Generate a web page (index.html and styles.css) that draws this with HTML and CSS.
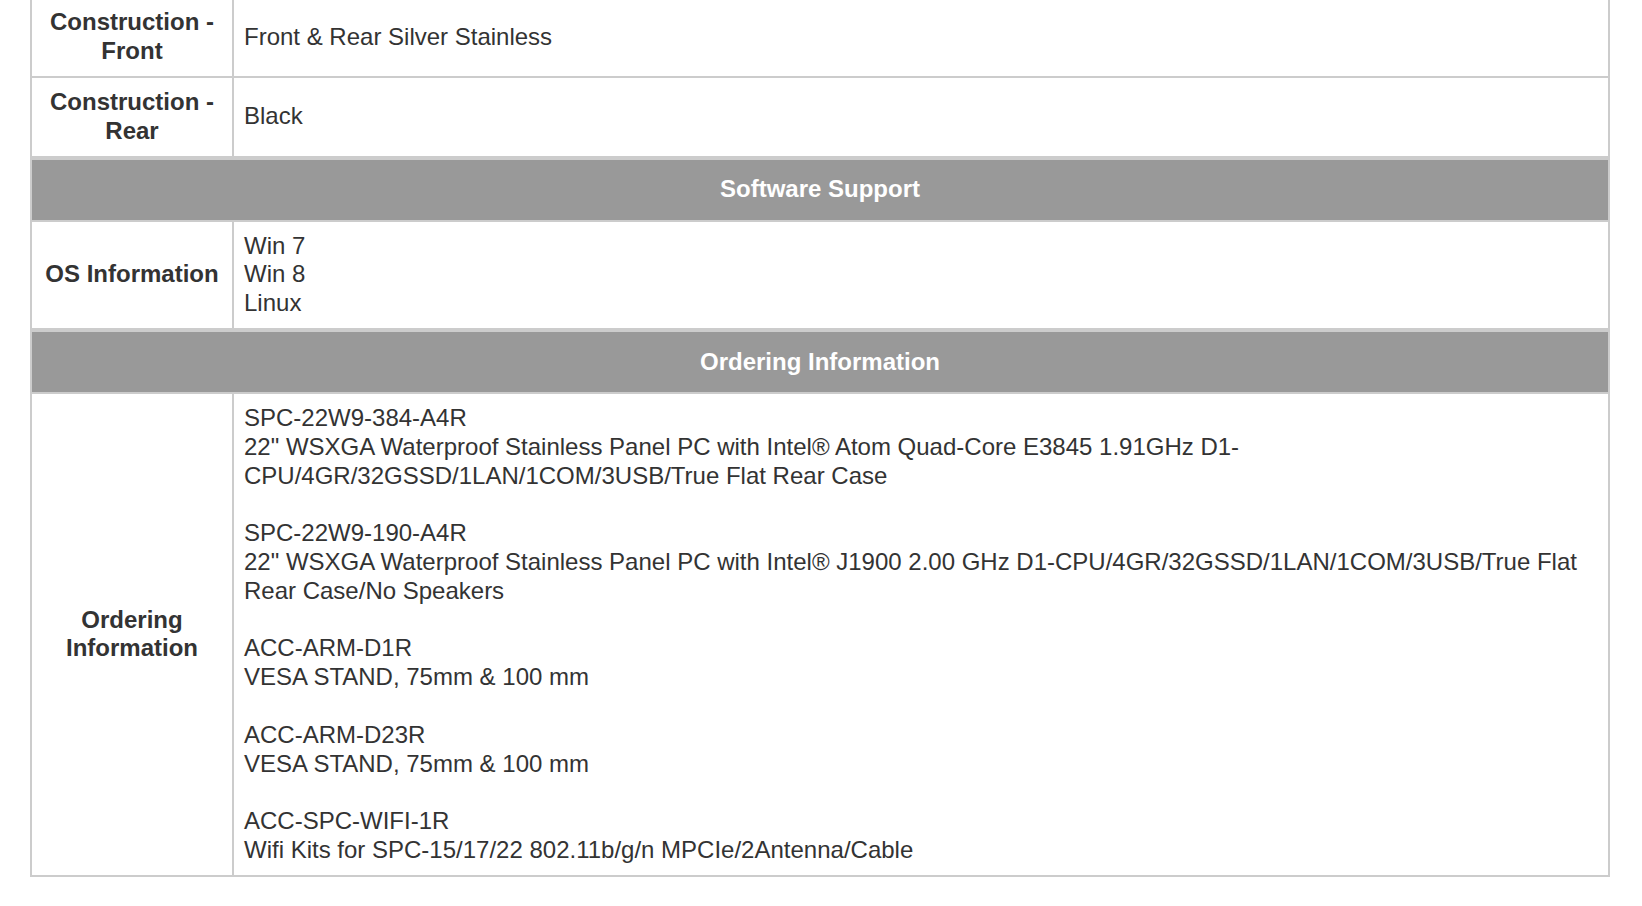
FILE: index.html
```html
<!DOCTYPE html>
<html lang="en">
<head>
<meta charset="utf-8">
<title>Specifications</title>
<link rel="stylesheet" href="styles.css">
</head>
<body>
<div class="specs">
  <table class="spec-table">
    <tbody>
      <tr>
        <td class="label">Construction - Front</td>
        <td class="value">Front &amp; Rear Silver Stainless</td>
      </tr>
      <tr>
        <td class="label">Construction - Rear</td>
        <td class="value">Black</td>
      </tr>
    </tbody>
  </table>
  <table class="spec-table">
    <tbody>
      <tr>
        <th class="section" colspan="2">Software Support</th>
      </tr>
      <tr>
        <td class="label">OS Information</td>
        <td class="value">Win 7<br>Win 8<br>Linux</td>
      </tr>
    </tbody>
  </table>
  <table class="spec-table">
    <tbody>
      <tr>
        <th class="section" colspan="2">Ordering Information</th>
      </tr>
      <tr>
        <td class="label">Ordering Information</td>
        <td class="value">
          <p class="item">SPC-22W9-384-A4R<br>22" WSXGA Waterproof Stainless Panel PC with Intel® Atom Quad-Core E3845 1.91GHz D1-CPU/4GR/32GSSD/1LAN/1COM/3USB/True Flat Rear Case</p>
          <p class="item">SPC-22W9-190-A4R<br>22" WSXGA Waterproof Stainless Panel PC with Intel® J1900 2.00 GHz D1-CPU/4GR/32GSSD/1LAN/1COM/3USB/True Flat Rear Case/No Speakers</p>
          <p class="item">ACC-ARM-D1R<br>VESA STAND, 75mm &amp; 100 mm</p>
          <p class="item">ACC-ARM-D23R<br>VESA STAND, 75mm &amp; 100 mm</p>
          <p class="item">ACC-SPC-WIFI-1R<br>Wifi Kits for SPC-15/17/22 802.11b/g/n MPCIe/2Antenna/Cable</p>
        </td>
      </tr>
    </tbody>
  </table>
</div>
</body>
</html>
```

FILE: styles.css
```css
html, body {
  margin: 0;
  padding: 0;
  background: #ffffff;
}

body {
  font-family: "Liberation Sans", Arial, Helvetica, sans-serif;
  font-size: 24px;
  line-height: 1.2;
  color: #333333;
}

.specs {
  padding: 0 32px 0 30px;
  margin-top: -3.6px;
}

.spec-table {
  box-sizing: border-box;
  width: 100%;
  border-collapse: separate;
  border-spacing: 0;
  border-top: 2px solid #cccccc;
  border-left: 2px solid #cccccc;
}

.spec-table td,
.spec-table th {
  border-right: 2px solid #cccccc;
  border-bottom: 2px solid #cccccc;
  padding: 10px;
  vertical-align: middle;
}

.spec-table .label {
  width: 180px;
  min-width: 180px;
  max-width: 180px;
  text-align: center;
  font-weight: bold;
}

.spec-table .value {
  text-align: left;
}

.spec-table .section {
  background: #999999;
  color: #ffffff;
  font-weight: bold;
  text-align: center;
  padding: 15.6px 10px;
}

.item {
  margin: 0 0 28.8px 0;
}

.item:last-child {
  margin-bottom: 0;
}
```
